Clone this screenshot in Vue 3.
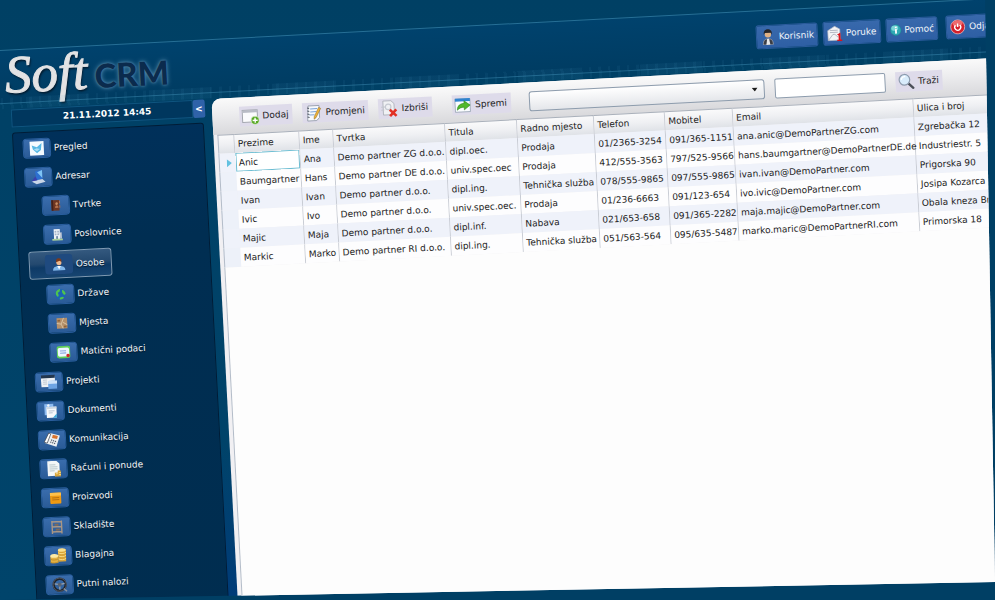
<script setup>
import { ref } from 'vue'

const actions = [
  { label: 'Korisnik', icon: 'user', w: 16 },
  { label: 'Poruke', icon: 'mail', w: 16 },
  { label: 'Pomoć', icon: 'info', w: 12 },
  { label: 'Odjava', icon: 'power', w: 16, last: true }
]

const menu = [
  { label: 'Pregled', icon: 'overview' },
  { label: 'Adresar', icon: 'address' },
  { label: 'Tvrtke', icon: 'book', sub: true },
  { label: 'Poslovnice', icon: 'office', sub: true },
  { label: 'Osobe', icon: 'person', sub: true },
  { label: 'Države', icon: 'globe', sub: true },
  { label: 'Mjesta', icon: 'map', sub: true },
  { label: 'Matični podaci', icon: 'card', sub: true },
  { label: 'Projekti', icon: 'project' },
  { label: 'Dokumenti', icon: 'docs' },
  { label: 'Komunikacija', icon: 'phone' },
  { label: 'Računi i ponude', icon: 'invoice' },
  { label: 'Proizvodi', icon: 'box' },
  { label: 'Skladište', icon: 'shelf' },
  { label: 'Blagajna', icon: 'coins' },
  { label: 'Putni nalozi', icon: 'wheel' }
]
const active = ref('Osobe')

const tools = [
  { label: 'Dodaj', icon: 'add' },
  { label: 'Promjeni', icon: 'edit' },
  { label: 'Izbriši', icon: 'delete' },
  { label: 'Spremi', icon: 'save', spaced: true }
]

const columns = ['Prezime', 'Ime', 'Tvrtka', 'Titula', 'Radno mjesto', 'Telefon', 'Mobitel', 'Email', 'Ulica i broj']
const rows = [
  ['Anic', 'Ana', 'Demo partner ZG d.o.o.', 'dipl.oec.', 'Prodaja', '01/2365-3254', '091/365-1151', 'ana.anic@DemoPartnerZG.com', 'Zgrebačka 12'],
  ['Baumgartner', 'Hans', 'Demo partner DE d.o.o.', 'univ.spec.oec', 'Prodaja', '412/555-3563', '797/525-9566', 'hans.baumgartner@DemoPartnerDE.de', 'Industriestr. 5'],
  ['Ivan', 'Ivan', 'Demo partner d.o.o.', 'dipl.ing.', 'Tehnička služba', '078/555-9865', '097/555-9865', 'ivan.ivan@DemoPartner.com', 'Prigorska 90'],
  ['Ivic', 'Ivo', 'Demo partner d.o.o.', 'univ.spec.oec.', 'Prodaja', '01/236-6663', '091/123-654', 'ivo.ivic@DemoPartner.com', 'Josipa Kozarca'],
  ['Majic', 'Maja', 'Demo partner d.o.o.', 'dipl.inf.', 'Nabava', '021/653-658', '091/365-2282', 'maja.majic@DemoPartner.com', 'Obala kneza Br'],
  ['Markic', 'Marko', 'Demo partner RI d.o.o.', 'dipl.ing.', 'Tehnička služba', '051/563-564', '095/635-5487', 'marko.maric@DemoPartnerRI.com', 'Primorska 18']
]
</script>

<template>
  <div class="backdrop">
    <svg class="sprite" aria-hidden="true">
      <symbol id="user" viewBox="0 0 16 16">
        <path d="M3 16c0-5 2-6 5-6s5 1 5 6z" fill="#3a3d44" stroke="#a9adb5" stroke-width=".7" />
        <path d="M7 10h2l1 6H6z" fill="#e8e8e8" />
        <circle cx="8" cy="5.5" r="3.2" fill="#e0b184" />
        <path d="M4 6c-.5-4 1.500-5.500 4-5.500S12.500 2 12 6l-1-2H5z" fill="#25262b" />
      </symbol>
      <symbol id="mail" viewBox="0 0 16 16">
        <path d="M1 5l7-4 5 3v11H1z" fill="#f4f4f6" stroke="#b7bcc6" stroke-width=".7" />
        <path d="M3 5h8M3 7h8M1 15l5-6h2l3 3" fill="none" stroke="#a4abb8" stroke-width=".8" />
        <path d="M10 9.500l3.500-2v7H15V16h-5v-1.500h1.500V10z" fill="#d8141c" />
      </symbol>
      <symbol id="info" viewBox="0 0 12 12">
        <circle cx="6" cy="6" r="5.300" fill="#2fa9b4" stroke="#1d8692" stroke-width=".6" />
        <ellipse cx="5" cy="4" rx="3.500" ry="2.600" fill="#7bd6d8" />
        <path d="M5.200 5h1.800v4.500H5.200zM5.200 2.500h1.800v1.500H5.200z" fill="#fff" />
      </symbol>
      <symbol id="power" viewBox="0 0 16 16">
        <circle cx="8" cy="8" r="7" fill="#d3202b" stroke="#efb4b4" stroke-width=".8" />
        <ellipse cx="8" cy="4.500" rx="5" ry="3" fill="#ee6a6d" />
        <path d="M5.800 6.200a3 3 0 1 0 4.400 0M8 4.500v3.500" fill="none" stroke="#fff" stroke-width="1.300" />
      </symbol>
      <symbol id="overview" viewBox="0 0 16 16">
        <path d="M1 1h14v14H1z" fill="#f5fbff" />
        <path d="M3 5l5 2 5-4-1 7-4 3-4-4z" fill="#58b8e4" />
        <path d="M5 9l3-1 3 1-3 2z" fill="#a9def5" />
      </symbol>
      <symbol id="address" viewBox="0 0 16 16">
        <path d="M5 2l7-1v9l-6 1z" fill="#2c6fd0" />
        <path d="M7 3l5-2v8z" fill="#7fc4f5" />
        <path d="M1 12l5-1 6-1 3 3-9 2z" fill="#c9d6e8" />
        <path d="M1 12l4-5 2 4z" fill="#3a3fae" />
      </symbol>
      <symbol id="book" viewBox="0 0 16 16">
        <path d="M3 2h9v12H3z" fill="#6e3622" /><path d="M3 2h2v12H3z" fill="#42201a" />
        <circle cx="9" cy="6" r="1.500" fill="#c98d62" /><path d="M7 11c0-4 4-4 4 0zM12 3h1v3h-1zM12 8h1v3h-1z" fill="#b3704c" />
      </symbol>
      <symbol id="office" viewBox="0 0 16 16">
        <path d="M4 2h7v12H4z" fill="#eef2f7" /><path d="M5 4h2v2H5zM8 4h2v2H8zM5 7h2v2H5zM8 7h2v2H8z" fill="#a5b3c8" />
        <path d="M6.500 10h2v4h-2z" fill="#6d86a3" /><path d="M2 13h12v2H2z" fill="#a9cf9b" /><path d="M11 6h2v7h-2z" fill="#c4ccd8" />
      </symbol>
      <symbol id="person" viewBox="0 0 16 16">
        <path d="M1 15c0-4 3-5 7-5s7 1 7 5z" fill="#7fb6ea" /><path d="M6 10h4l-2 4z" fill="#fff" />
        <circle cx="8" cy="6" r="3" fill="#f0b98c" /><path d="M5 5.500C4.500 2 6 1 8 1s3.500 1 3 4.500L9 4z" fill="#7c3b1c" />
      </symbol>
      <symbol id="globe" viewBox="0 0 16 16">
        <circle cx="8" cy="8" r="6" fill="#1c63b5" />
        <path d="M3 5c2-3 4-3 5-3L7 5 5 6l1 3-1 2C3 10 2 7 3 5zM10 3c3 1 4 4 4 5l-2 1-2-3zM7 12l3-1 2 1c-1 2-4 2-5 2z" fill="#4fc34e" />
      </symbol>
      <symbol id="map" viewBox="0 0 16 16">
        <path d="M2 2h12v12H2z" fill="#b4906a" /><path d="M2 8l5 1 3-7M7 9l2 5M9 7l5 3" fill="none" stroke="#dcc7a5" stroke-width="1" />
        <path d="M3 4h3v2H3zM10 11h3v2h-3z" fill="#8f6339" />
      </symbol>
      <symbol id="card" viewBox="0 0 16 16">
        <rect x="0" y="1" width="16" height="14" rx="3" fill="#5fce58" /><rect x="1.500" y="3" width="13" height="10" rx="2" fill="#eef6ff" />
        <path d="M4 6.500h7M4 9h7" stroke="#86a5dd" stroke-width="1.200" /><circle cx="13" cy="12" r="2" fill="#d3262a" />
      </symbol>
      <symbol id="project" viewBox="0 0 16 16">
        <path d="M0 2h14v11H0z" fill="#eef1f4" /><path d="M0 1h14v3H0z" fill="#23364d" />
        <path d="M2 6h4M2 8h4M2 10h4" stroke="#c1c8d1" stroke-width="1" /><path d="M7 7h9v8H7z" fill="#6ea4e4" /><path d="M7 7h9v3H7z" fill="#cfe3fa" />
      </symbol>
      <symbol id="docs" viewBox="0 0 16 16">
        <path d="M2 1h9v11H2z" fill="#8dbaf0" /><path d="M4 4h10v11H4z" fill="#f7f9fb" />
        <path d="M4 4h10v2H4z" fill="#cfd8e2" /><path d="M6 8h6M6 10h4" stroke="#b9c4d1" stroke-width="1" />
        <path d="M10 15l4-4v4z" fill="#3aa6d6" /><circle cx="6" cy="2.500" r="1.300" fill="#f2f5f9" />
      </symbol>
      <symbol id="phone" viewBox="0 0 16 16">
        <path d="M6 1l10 3-4 11-11-4z" fill="#eceff2" /><path d="M9 3l5 1.500-1 3-5-1.500z" fill="#d9732e" />
        <path d="M7 8l5 2M6 10l5 2" stroke="#59616d" stroke-width="1.200" stroke-dasharray="1.200 .8" />
        <path d="M5 1l2 1-4 9-3-1z" fill="#fff" stroke="#3a414c" stroke-width=".7" />
      </symbol>
      <symbol id="invoice" viewBox="0 0 16 16">
        <path d="M2 0h9l3 3v12H2z" fill="#f4f7f7" /><path d="M4 4h6M4 6h8M4 8h8M4 10h5" stroke="#b9c8cb" stroke-width="1" />
        <path d="M9 12h3v-2h3v6H9z" fill="#d8a63c" /><path d="M10 13h2M13 12h2M13 14h2" stroke="#fbe39a" stroke-width=".8" />
      </symbol>
      <symbol id="box" viewBox="0 0 16 16">
        <rect x="3" y="3" width="11" height="11" rx="1" fill="#f09a12" /><path d="M3 3h11v3H3z" fill="#ffc04a" />
        <path d="M5 8h7M5 10h7" stroke="#b87212" stroke-width="1" />
      </symbol>
      <symbol id="shelf" viewBox="0 0 16 16">
        <path d="M3.500 2v13M13 2v13M3 3h10M3 8h10M3 13h10" stroke="#a89685" stroke-width="1.400" fill="none" />
        <path d="M6 5h4v2H6zM7 10h4v2H7z" fill="#7f6a5a" />
      </symbol>
      <symbol id="coins" viewBox="0 0 16 16">
        <path d="M8 2h8v12H8z" fill="#d9a437" /><ellipse cx="12" cy="2.500" rx="4" ry="1.800" fill="#fbe08b" />
        <path d="M8 5c2 1.500 6 1.500 8 0M8 8c2 1.500 6 1.500 8 0M8 11c2 1.500 6 1.500 8 0" fill="none" stroke="#fbe08b" stroke-width=".9" />
        <path d="M0 8h8v7H0z" fill="#e2b144" /><ellipse cx="4" cy="8" rx="4" ry="1.900" fill="#fdeaa5" />
        <path d="M0 11c2 1.500 6 1.500 8 0M0 14c2 1.500 6 1.500 8 0" fill="none" stroke="#c08c26" stroke-width=".9" />
      </symbol>
      <symbol id="wheel" viewBox="0 0 16 16">
        <circle cx="8" cy="8" r="6" fill="none" stroke="#20242b" stroke-width="2.400" /><circle cx="8" cy="8" r="6.600" fill="none" stroke="#6d7683" stroke-width=".6" />
        <path d="M3 7l5 1 5-1M8 8v5" stroke="#98a1ad" stroke-width="1.300" fill="none" /><circle cx="8" cy="8" r="2" fill="#59626f" />
        <path d="M12 12l3 3" stroke="#8a93a1" stroke-width="1.500" />
      </symbol>
      <symbol id="add" viewBox="0 0 18 18">
        <path d="M1 3h15v12H1z" fill="#fbfbfd" stroke="#a3a6ae" /><path d="M1 3h15v2.500H1z" fill="#b9bcc6" />
        <circle cx="13.500" cy="13.500" r="4" fill="#58a827" stroke="#d5ecc0" stroke-width=".8" /><path d="M13.500 11v5M11 13.500h5" stroke="#fff" stroke-width="1.400" />
      </symbol>
      <symbol id="edit" viewBox="0 0 18 18">
        <path d="M4 2h11v12l-3 3H3z" fill="#f7f9fc" stroke="#8c94a3" stroke-width=".8" />
        <path d="M6 5h7M6 8h6M5 11h5" stroke="#7ba3d8" stroke-width="1" /><path d="M3 4l2 .5M3 7l2 .5M3 10l2 .5M3 13l2 .5" stroke="#565d69" stroke-width="1" />
        <path d="M14.500 4l2 1-5 9-2 1.500.2-2.500z" fill="#f0b53a" stroke="#8d6418" stroke-width=".5" />
      </symbol>
      <symbol id="delete" viewBox="0 0 18 18">
        <path d="M3 1h8l3 3v11H3z" fill="#f0f1f4" stroke="#a9adb5" stroke-width=".8" />
        <circle cx="8" cy="7" r="2.800" fill="none" stroke="#c6cad2" stroke-width="1.200" /><path d="M1 7h4M1 10h3" stroke="#c2c6ce" stroke-width="1" />
        <path d="M9.500 10l6.500 6.500M16 10l-6.500 6.500" stroke="#e23024" stroke-width="2.600" />
      </symbol>
      <symbol id="save" viewBox="0 0 18 18">
        <path d="M1 3h15v13H1z" fill="#fafcff" stroke="#97a3b3" stroke-width=".8" /><path d="M1 2.500h15v3H1z" fill="#2f83cf" />
        <path d="M3 14c0-5 4-6.500 7-6.500V5l6 4.500-6 4.500v-2.700c-3 0-5 .7-7 2.700z" fill="#52b82c" stroke="#2e8a1a" stroke-width=".6" />
      </symbol>
      <symbol id="search" viewBox="0 0 18 18">
        <path d="M11 11l4.500 4.500" stroke="#4b4f58" stroke-width="2.400" stroke-linecap="round" />
        <circle cx="7" cy="7" r="5.300" fill="#d8ecfb" stroke="#8d9bad" stroke-width="1.200" /><path d="M4 7a3 3 0 0 1 4-3" stroke="#fff" stroke-width="1.400" fill="none" />
      </symbol>
    </svg>

    <div class="frame">
      <div class="page">
        <header class="topbar">
          <h1 class="brand"><span class="soft">Soft</span><span class="crm">CRM</span></h1>
          <nav class="actions">
            <button v-for="a in actions" :key="a.label" type="button" class="action" :class="{ last: a.last }">
              <svg :width="a.w" :height="a.w"><use :href="'#' + a.icon" /></svg>{{ a.label }}
            </button>
          </nav>
        </header>

        <div class="main">
          <aside class="side">
            <div class="clock">
              <time datetime="2012-11-21T14:45">21.11.2012 14:45</time>
              <button type="button" class="collapse">&lt;</button>
            </div>
            <ul class="menu">
              <li v-for="m in menu" :key="m.label" :class="{ sub: m.sub, on: active === m.label }">
                <button type="button" class="entry" @click="active = m.label">
                  <span class="tile"><svg :width="m.sub ? 14 : 16" :height="m.sub ? 14 : 16"><use :href="'#' + m.icon" /></svg></span>{{ m.label }}
                </button>
              </li>
            </ul>
          </aside>

          <section class="panel">
            <div class="toolbar">
              <button v-for="t in tools" :key="t.label" type="button" class="tool" :class="{ spaced: t.spaced }">
                <svg width="18" height="18"><use :href="'#' + t.icon" /></svg>{{ t.label }}
              </button>
              <span class="picker">
                <select aria-label="Filter"><option></option></select>
                <svg class="caret" width="6" height="4" viewBox="0 0 6 4"><path d="M0 0h6L3 4z" fill="#1c1c1c" /></svg>
              </span>
              <input class="query" type="text" aria-label="Pojam">
              <button type="button" class="tool"><svg width="18" height="18"><use href="#search" /></svg>Traži</button>
            </div>
            <table class="grid">
              <colgroup>
                <col class="c0"><col class="c1"><col class="c2"><col class="c3"><col class="c4"><col class="c5"><col class="c6"><col class="c7"><col class="c8"><col>
              </colgroup>
              <thead>
                <tr><th></th><th v-for="c in columns" :key="c">{{ c }}</th></tr>
              </thead>
              <tbody>
                <tr v-for="(r, i) in rows" :key="r[0]">
                  <td class="mark"><svg v-if="i === 0" width="5" height="8" viewBox="0 0 5 8"><path d="M0 0l5 4-5 4z" fill="#62c1e0" /></svg></td>
                  <td v-for="(v, j) in r" :key="j" :class="{ focus: i === 0 && j === 0 }">{{ v }}</td>
                </tr>
              </tbody>
            </table>
          </section>
        </div>
      </div>
    </div>
  </div>
</template>

<style>
body {
  margin: 0;
  overflow: hidden;
}
</style>

<style scoped>
* {
  box-sizing: border-box;
}
.backdrop {
  height: 100vh;
  overflow: hidden;
  background: #003f64;
  font: 9px/12px "DejaVu Sans", Verdana, sans-serif;
}
.sprite {
  display: none;
}
.frame {
  height: 100%;
  overflow: hidden;
  background: linear-gradient(180deg, #004064 0, #004166 20%, #00446b 100%);
  clip-path: polygon(0 0, 99% 0, 100% 97%, 0 100%);
}
.page {
  display: flex;
  flex-direction: column;
  width: calc(100% + 55px);
  height: 115%;
  margin-left: -40px;
  padding-top: 50px;
  transform: rotate(-3deg);
  transform-origin: 40px 0;
}
button,
input,
select {
  font: inherit;
  margin: 0;
}
svg {
  flex: none;
  display: block;
}

.topbar {
  position: relative;
  display: flex;
  align-items: center;
  height: 54px;
  padding: 0 8px 0 41px;
  border-top: 1px solid #266f96;
  border-bottom: 1px solid #1f658b;
  background: linear-gradient(180deg, #00426d, #003c62);
}
.topbar::after {
  content: "";
  position: absolute;
  inset: auto 0 -6px 0;
  height: 11px;
  background:
    repeating-linear-gradient(90deg, transparent 0 7px, rgba(70, 150, 190, .08) 7px 10px, transparent 10px 17px, rgba(70, 150, 190, .08) 17px 19px),
    repeating-linear-gradient(90deg, transparent 0 61px, rgba(70, 150, 190, .08) 61px 123px);
}
.brand {
  display: flex;
  align-items: baseline;
  gap: 7px;
  margin: 0;
  font-weight: normal;
  line-height: 54px;
}
.soft {
  font-family: "Liberation Serif", serif;
  font-style: italic;
  font-size: 53px;
  color: #e3e3e4;
  -webkit-text-stroke: 1px #e3e3e4;
  text-shadow: 1px 2px 2px #03192b;
}
.crm {
  font-family: Lato, sans-serif;
  font-weight: 900;
  font-size: 33px;
  color: #0b2b4d;
  text-shadow: 0 0 2px #4f86a8, 0 0 5px #5b8fb2;
}
.actions {
  position: relative;
  z-index: 1;
  display: flex;
  gap: 5px;
  margin-left: auto;
}
.action {
  display: flex;
  align-items: center;
  gap: 3px;
  height: 24px;
  padding: 0 3px;
  border: 1px solid #2a5b9c;
  border-radius: 3px;
  background: linear-gradient(180deg, #3869ac, #2e5fa4);
  color: #f1f5fa;
}
.action.last {
  margin-left: 3px;
}

.main {
  flex: 1;
  display: flex;
  gap: 7px;
  padding: 6px 0 0 45px;
  background: linear-gradient(180deg, transparent 60%, #003a7a 90%) 236px 0 / 12px 100% no-repeat;
}
.side {
  flex: none;
  display: flex;
  flex-direction: column;
  gap: 5px;
  width: 194px;
}
.clock {
  display: flex;
  height: 18px;
}
.clock time {
  flex: 1;
  padding-left: 10px;
  border: 1px solid #0f5680;
  background: #00375e;
  color: #fff;
  font-weight: bold;
  line-height: 16px;
  text-align: center;
}
.collapse {
  width: 12px;
  padding: 0;
  border: 0;
  border-radius: 2px;
  background: #2f62a8;
  color: #fff;
  font-weight: bold;
}
.menu {
  flex: 1;
  width: 192px;
  margin: 0;
  padding: 1px 9px;
  list-style: none;
  border: 1px solid #001c36;
  border-radius: 3px;
  background: linear-gradient(180deg, #00305a 0, #002e52 20%, #002d4f 100%);
}
.menu li {
  display: flex;
  align-items: center;
  height: 29px;
}
.entry {
  display: flex;
  align-items: center;
  gap: 3px;
  height: 28px;
  padding: 0;
  border: 1px solid transparent;
  border-width: 1px 0;
  background: none;
  color: #f2f6fa;
  text-shadow: 0 1px 1px #001528;
}
.sub .entry {
  padding: 0 6px 0 16px;
}
.menu .on {
  height: 31px;
}
.on .entry {
  border: 1px solid #7f9ab3;
  border-radius: 3px;
  padding-left: 15px;
  background: linear-gradient(180deg, #34597f 0, #24496f 45%, #0e3a66 60%, #174571 100%);
}
.tile {
  display: flex;
  align-items: center;
  justify-content: center;
  width: 28px;
  height: 20px;
  border: 1px solid #2a5f9f;
  border-radius: 4px;
  background: linear-gradient(180deg, #3a6dad, #2a5b97);
}
.on .tile {
  border-color: transparent;
  background: #1f4a7f;
}

.panel {
  flex: 1;
  display: flex;
  flex-direction: column;
  min-width: 0;
  padding: 0 0 0 4px;
  border-radius: 9px 0 0 0;
  background: #f1f0f3;
}
.toolbar {
  display: flex;
  align-items: center;
  gap: 10px;
  height: 36px;
  margin-left: -4px;
  padding: 2px 0 0 27px;
  border-radius: 9px 0 0 0;
  background: linear-gradient(180deg, #fafafa 0, #ececee 45%, #d9d9dc 100%);
}
.tool {
  display: flex;
  align-items: center;
  gap: 3px;
  height: 20px;
  padding: 0 4px 0 2px;
  border: 0;
  background: #dedbea;
  color: #222;
}
.spaced {
  margin-left: 10px;
}
.picker {
  position: relative;
  flex: none;
  width: 236px;
  margin-left: 8px;
}
.picker select {
  display: block;
  width: 100%;
  height: 20px;
  border: 1px solid #8d9cad;
  border-radius: 3px;
  appearance: none;
  background: linear-gradient(180deg, #fff, #e4e6ea);
}
.caret {
  position: absolute;
  right: 7px;
  top: 8px;
}
.query {
  width: 111px;
  height: 20px;
  padding: 0 4px;
  border: 1px solid #8d9cad;
  border-radius: 2px;
  background: #fff;
}
.grid {
  table-layout: fixed;
  width: 100%;
  border-collapse: separate;
  border-spacing: 0;
  color: #1c1c1c;
}
.panel::after {
  content: "";
  flex: 1;
  border-left: 1px solid #b3bcc8;
  background: #fdfdfd;
}
.c0 { width: 17px; }
.c1 { width: 65px; }
.c2 { width: 34px; }
.c3 { width: 112px; }
.c4 { width: 72px; }
.c5 { width: 77px; }
.c6 { width: 71px; }
.c7 { width: 68px; }
.c8 { width: 181px; }
.grid th,
.grid td {
  height: 19px;
  padding: 0 0 0 3px;
  border-right: 1px solid #c8ccd4;
  font-weight: normal;
  line-height: 18px;
  text-align: left;
  white-space: nowrap;
}
.grid th {
  border-top: 1px solid #a9b0ba;
  background: linear-gradient(180deg, #fafafb 0, #eff0f3 50%, #dfe2e7 100%);
}
.grid td {
  background: #fdfdfe;
}
.grid tr:nth-child(odd) td {
  background: #eff2fa;
}
.grid th:first-child,
.grid td:first-child {
  border-left: 1px solid #b3bcc8;
}
.grid tbody .mark {
  padding-left: 7px;
  border-right-color: transparent;
  background: #edf1f9;
}
.grid tr:nth-child(odd) .focus {
  background: #fff;
  box-shadow: inset 0 0 0 1px #6cbdd2;
}
</style>
